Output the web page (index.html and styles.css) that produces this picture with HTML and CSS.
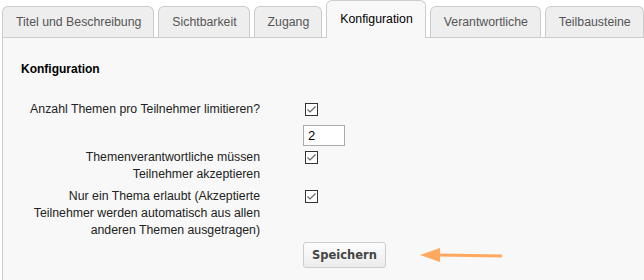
FILE: index.html
```
<!DOCTYPE html>
<html>
	<head>
		<meta charset="utf-8">
		<title>Konfiguration</title>
		<link rel="stylesheet" href="styles.css">
	</head>
	<body>
		<div class="tabs">
			<a class="tab" href="javascript:;">Titel und Beschreibung</a>
			<a class="tab" href="javascript:;">Sichtbarkeit</a>
			<a class="tab" href="javascript:;">Zugang</a>
			<a class="tab active" href="javascript:;">Konfiguration</a>
			<a class="tab" href="javascript:;">Verantwortliche</a>
			<a class="tab" href="javascript:;">Teilbausteine</a>
		</div>
		<div class="panel">
			<h3 class="legend">Konfiguration</h3>
			<div class="form">
				<div class="label">Anzahl Themen pro Teilnehmer limitieren?</div>
				<div class="ctrl"><span class="check"><svg width="13" height="13" viewBox="0 0 13 13"><rect x="0.5" y="0.5" width="12" height="12" fill="#fff" stroke="#333"/><path d="M2.5 6.5 L5 9 L10.5 3.5" fill="none" stroke="#666" stroke-width="1.2"/></svg></span></div>

				<div class="label"></div>
				<div class="ctrl"><input class="num" type="text" value="2"></div>

				<div class="label">Themenverantwortliche müssen<br>Teilnehmer akzeptieren</div>
				<div class="ctrl"><span class="check"><svg width="13" height="13" viewBox="0 0 13 13"><rect x="0.5" y="0.5" width="12" height="12" fill="#fff" stroke="#333"/><path d="M2.5 6.5 L5 9 L10.5 3.5" fill="none" stroke="#666" stroke-width="1.2"/></svg></span></div>

				<div class="label">Nur ein Thema erlaubt (Akzeptierte<br>Teilnehmer werden automatisch aus allen<br>anderen Themen ausgetragen)</div>
				<div class="ctrl"><span class="check"><svg width="13" height="13" viewBox="0 0 13 13"><rect x="0.5" y="0.5" width="12" height="12" fill="#fff" stroke="#333"/><path d="M2.5 6.5 L5 9 L10.5 3.5" fill="none" stroke="#666" stroke-width="1.2"/></svg></span></div>

				<div class="label"></div>
				<div class="ctrl buttons">
					<button class="btn">Speichern</button>
					<svg class="arrow" width="86" height="16" viewBox="0 0 86 16"><path d="M18 8 L82 9" stroke="#ffa960" stroke-width="3"/><polygon points="0,8 20,1 20,15" fill="#ffa960"/></svg>
				</div>
			</div>
		</div>
	</body>
</html>
```
FILE: styles.css
```
*{
	margin: 0;
	padding: 0;
	box-sizing: border-box;
}
body{
	font-family: "Liberation Sans", Arial, sans-serif;
	font-size: 12.3px;
	color: #222;
	background: #fff;
	overflow: hidden;
}
.tabs{
	display: flex;
	align-items: flex-end;
	gap: 4px;
	padding-left: 2px;
	height: 37px;
}
.tab{
	display: block;
	flex-shrink: 0;
	white-space: nowrap;
	height: 31px;
	line-height: 31px;
	padding: 0 12px 0 13px;
	border: 1px solid #ccc;
	border-bottom: none;
	border-radius: 6px 6px 0 0;
	background: #eee;
	color: #555;
	text-decoration: none;
}
.tab.active{
	height: 38px;
	line-height: 36px;
	margin-bottom: -1px;
	background: #f8f8f8;
	color: #000;
	position: relative;
	z-index: 1;
}
.panel{
	margin-left: 2px;
	margin-right: -10px;
	min-height: 243px;
	border: 1px solid #ccc;
	background: #f8f8f8;
	padding: 24px 18px;
}
.legend{
	font-size: 12px;
	font-weight: bold;
	color: #000;
	margin-bottom: 25px;
}
.form{
	display: grid;
	grid-template-columns: 239px 1fr;
	column-gap: 43px;
	row-gap: 5px;
	line-height: 17px;
}
.label{
	text-align: right;
	white-space: nowrap;
	color: #222;
}
.ctrl{
	min-height: 17px;
}
.check{
	display: block;
	width: 13px;
	height: 13px;
	margin: 2px 0 0 2px;
}
.check svg{
	display: block;
}
.num{
	display: block;
	width: 42px;
	height: 21px;
	border: 1px solid #aaa;
	background: #fff;
	font-family: "Liberation Sans", Arial, sans-serif;
	font-size: 13px;
	padding: 0 4px;
	color: #000;
	margin: 2px 0 -2px;
}
.buttons{
	display: flex;
	align-items: center;
	gap: 34px;
	margin-top: -2px;
}
.btn{
	width: 83px;
	height: 26px;
	border: 1px solid #ccc;
	border-radius: 3px;
	background: linear-gradient(#fdfdfd, #ececec);
	font-family: "DejaVu Sans", Verdana, sans-serif;
	font-size: 11.5px;
	font-weight: bold;
	color: #444;
}
.arrow{
	display: block;
}
```
